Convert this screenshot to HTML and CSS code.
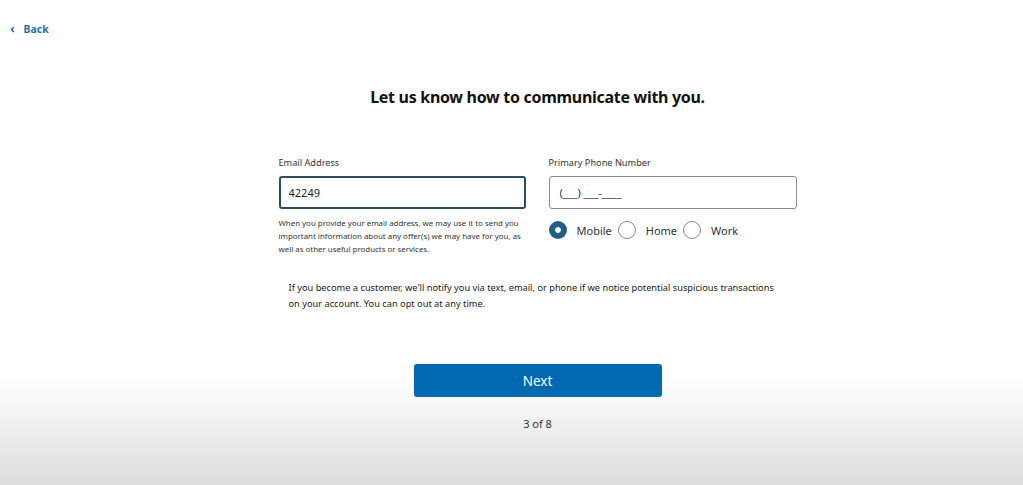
FILE: index.html
```html
<!DOCTYPE html>
<html lang="en">
<head>
  <meta charset="UTF-8" />
  <meta name="viewport" content="width=device-width, initial-scale=1.0"/>
  <title>Contact Information</title>
  <link rel="stylesheet" href="styles.css">
</head>
<body>
  <div class="top-bar">
    <a href="#" class="back-link"><span class="chevron">&#8249;</span> Back</a>
  </div>

  <div class="main">
    <div class="container">
      <h2>Let us know how to communicate with you.</h2>

      <form id="contactForm" class="form-grid">
        <div class="field">
          <label for="email">Email Address</label>
          <input type="text" id="email" name="email" value="42249" class="active">
          <p class="helper">When you provide your email address, we may use it to send you important information about any offer(s) we may have for you, as well as other useful products or services.</p>
        </div>

        <div class="field">
          <label for="phone">Primary Phone Number</label>
          <input type="tel" id="phone" name="phone" placeholder="(___) ___-____">
          <div class="radio-row">
            <label class="radio"><span class="dot checked"></span>Mobile</label>
            <label class="radio"><span class="dot"></span>Home</label>
            <label class="radio"><span class="dot"></span>Work</label>
          </div>
        </div>
      </form>

      <p class="notice">If you become a customer, we'll notify you via text, email, or phone if we notice potential suspicious transactions on your account. You can opt out at any time.</p>

      <button type="submit" class="next-btn">Next</button>
      <p class="step">3 of 8</p>
    </div>
  </div>
</body>
</html>
```

FILE: styles.css
```css
html {
  height: 100%;
}
body {
  font-family: 'Noto Sans', 'Open Sans', sans-serif;
  margin: 0;
  padding: 0;
  min-height: 100%;
  color: #1b1b1b;
  background: linear-gradient(to bottom, #fff 0, #fff 375px, #f1f1f1 420px, #dcdcdc 485px);
}
.top-bar {
  padding: 16px 10px 0;
  height: 25px;
}
.back-link {
  color: #1f6f9f;
  font-weight: bold;
  font-size: 10.5px;
  text-decoration: none;
}
.chevron {
  font-size: 13px;
  margin-right: 6px;
}
.main {
  padding-left: 52px;
}
.container {
  width: 518px;
  margin: 0 auto;
  padding-top: 45px;
}
h2 {
  text-align: center;
  font-size: 16px;
  letter-spacing: -0.3px;
  font-weight: bold;
  color: #111;
  margin: 0 -40px 48px;
}
.form-grid {
  display: grid;
  grid-template-columns: 247px 248px;
  column-gap: 23px;
}
label {
  display: block;
  font-size: 9.2px;
  color: #333;
  margin-bottom: 7px;
}
input {
  box-sizing: border-box;
  width: 100%;
  height: 33px;
  padding: 0 10px;
  border: 1px solid #8a8a8a;
  border-radius: 3px;
  font-family: inherit;
  font-size: 11px;
  color: #222;
  margin: 0;
}
input::placeholder {
  color: #333;
}
input.active {
  border: 2px solid #2b4d63;
  padding: 0 8px;
}
.helper {
  font-size: 7.9px;
  line-height: 13px;
  color: #333;
  margin: 8px 0 0;
}
.radio-row {
  display: flex;
  align-items: center;
  margin-top: 12px;
}
.radio {
  display: flex;
  align-items: center;
  font-size: 11px;
  color: #333;
  margin: 0 6px 0 0;
}
.dot {
  box-sizing: border-box;
  width: 18px;
  height: 18px;
  border-radius: 50%;
  border: 1px solid #8a8a8a;
  margin-right: 10px;
  background: #fff;
}
.dot.checked {
  border: none;
  background: radial-gradient(circle, #fff 0, #fff 2.5px, #215f86 3.2px);
}
.notice {
  font-size: 9.25px;
  line-height: 16px;
  color: #222;
  margin: 24px 0 0 10px;
  padding-right: 10px;
}
.next-btn {
  display: block;
  width: 248px;
  height: 33px;
  margin: 52px auto 0;
  background-color: #0069b1;
  color: #fff;
  border: none;
  border-radius: 3px;
  font-family: inherit;
  font-size: 13.5px;
  cursor: pointer;
}
.step {
  text-align: center;
  font-size: 11px;
  color: #333;
  margin: 19px 0 0;
}
```
